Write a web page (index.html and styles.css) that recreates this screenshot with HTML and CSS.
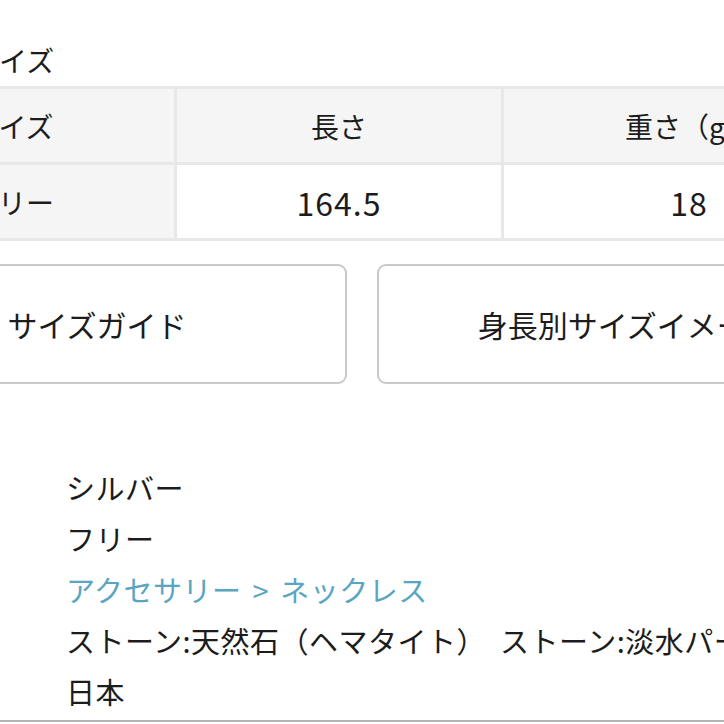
FILE: index.html
```
<html>
<head>
<meta charset="UTF-8">
<meta name="viewport" content="width=device-width, initial-scale=1.0">
<title>サイズ</title>
<link rel="stylesheet" href="styles.css">
</head>
<body>
    <div class="page">
        <p class="title">サイズ</p>
        <table class="size-table">
            <tr>
                <th class="col-size">サイズ</th>
                <th class="col-len">長さ</th>
                <th class="col-weight">重さ（g）</th>
            </tr>
            <tr>
                <th>フリー</th>
                <td class="num">164.5</td>
                <td class="num">18</td>
            </tr>
        </table>

        <div class="buttons">
            <a class="btn" href="#">サイズガイド</a>
            <a class="btn" href="#">身長別サイズイメージ</a>
        </div>

        <!-- 商品情報 -->
        <ul class="spec">
            <li>シルバー</li>
            <li>フリー</li>
            <li><a href="#">アクセサリー &gt; ネックレス</a></li>
            <li>ストーン:天然石（ヘマタイト）&nbsp; ストーン:淡水パール</li>
            <li>日本</li>
        </ul>
    </div>
</body>
</html>
```

FILE: styles.css
```
body {
    margin: 0;
    overflow: hidden;
    background: #fff;
    color: #1c1c1c;
    font-family: "Noto Sans CJK JP", "Noto Sans", sans-serif;
}
.page {
    width: 1030px;
    margin-left: -153px;
    padding-top: 40px;
    padding-bottom: 3px;
    border-bottom: 2px solid #b4b4b4;
}
.title {
    margin: 0 0 6px 0;
    padding-left: 124px;
    font-size: 28px;
    line-height: 40px;
}
.size-table {
    width: 1030px;
    border-collapse: collapse;
    font-size: 28px;
    table-layout: fixed;
}
.size-table th,
.size-table td {
    border: 3px solid #e8e8e8;
    height: 76px;
    padding: 0;
    text-align: center;
    font-weight: normal;
}
.size-table th {
    background: #f5f5f5;
}
.size-table .num {
    font-size: 32px;
    letter-spacing: 1px;
}
.col-size { width: 324px; }
.col-len { width: 324px; }
.buttons {
    display: flex;
    gap: 30px;
    margin-top: 23px;
}
.btn {
    flex: 1;
    height: 116px;
    display: flex;
    align-items: center;
    justify-content: center;
    border: 2px solid #c9c9c9;
    border-radius: 9px;
    color: #1c1c1c;
    text-decoration: none;
    font-size: 30px;
}
.spec {
    list-style: none;
    margin: 78px 0 0 0;
    padding: 0 0 0 219px;
    font-size: 29px;
    letter-spacing: 0.5px;
    line-height: 51px;
    white-space: nowrap;
}
.spec a {
    color: #5aa5bf;
    text-decoration: none;
    word-spacing: 4px;
}
```
